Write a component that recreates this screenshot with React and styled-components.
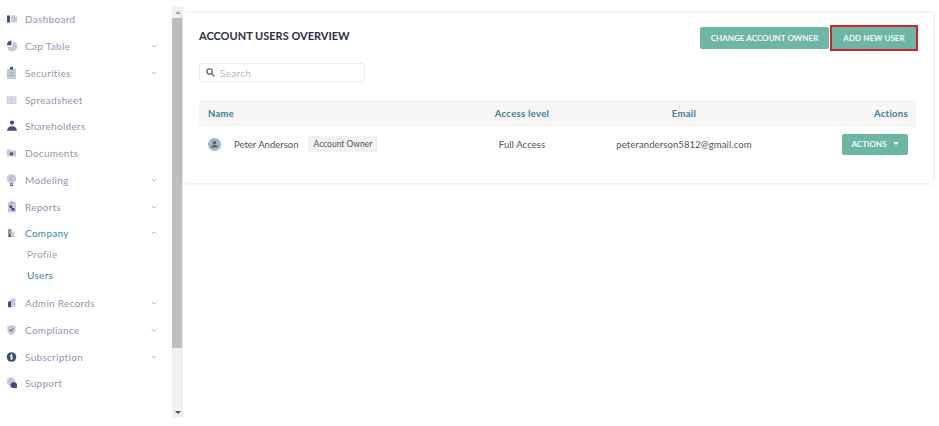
import React from 'react'
import styled, { createGlobalStyle } from 'styled-components'

const GlobalStyle = createGlobalStyle`
  html, body {
    margin: 0;
    padding: 0;
    background: #fff;
    font-family: 'Lato', 'Liberation Sans', sans-serif;
  }
`

const Page = styled.div`
  display: flex;
  width: 939px;
  height: 426px;
  overflow: hidden;
`

const Sidebar = styled.nav`
  width: 172px;
  flex: none;
  padding-top: 6px;
  box-sizing: border-box;
`

const NavRow = styled.div`
  display: flex;
  align-items: center;
  height: 26.75px;
  padding-left: 6px;
  font-size: 10px;
  letter-spacing: 0.3px;
  color: ${({ $active }) => ($active ? '#3a85ad' : '#8c97b3')};
`

const NavIcon = styled.svg`
  width: 12px;
  height: 12px;
  margin-right: 7px;
  flex: none;
`

const NavLabel = styled.span`
  flex: 1;
`

const Chevron = styled.svg`
  width: 6px;
  height: 4px;
  margin-right: 15px;
  fill: none;
  stroke: #a9b1c4;
  stroke-width: 1;
`

const SubList = styled.div`
  margin: -3px 0 4px;
`

const SubRow = styled.div`
  height: 21px;
  display: flex;
  align-items: center;
  padding-left: 27px;
  font-size: 10px;
  letter-spacing: 0.3px;
  color: ${({ $active }) => ($active ? '#3a85ad' : '#9aa0ad')};
`

const Scrollbar = styled.div`
  width: 11px;
  height: 412px;
  margin-top: 6px;
  flex: none;
  display: flex;
  flex-direction: column;
  background: #f0f0f0;
`

const ScrollArrow = styled.div`
  height: 12px;
  flex: none;
  display: flex;
  align-items: center;
  justify-content: center;
  &::before {
    content: '';
    border-left: 3px solid transparent;
    border-right: 3px solid transparent;
    ${({ $down }) => ($down ? 'border-top: 3px solid #505050;' : 'border-bottom: 3px solid #a3a3a3;')}
  }
`

const ScrollThumb = styled.div`
  height: 330px;
  flex: none;
  margin-right: 1px;
  background: #bebebe;
`

const ScrollTrack = styled.div`
  flex: 1;
`

const Main = styled.main`
  flex: 1;
  padding-top: 13px;
`

const Card = styled.section`
  width: 750px;
  height: 170px;
  box-sizing: border-box;
  padding: 14px 17px 0 16px;
  background: #fff;
  border-radius: 3px;
  box-shadow: 0 0 4px rgba(60, 70, 90, 0.16);
`

const CardHeader = styled.header`
  display: flex;
  align-items: center;
  justify-content: space-between;
  height: 22px;
`

const Title = styled.h1`
  margin: 0 0 6px;
  font-size: 11px;
  font-weight: 700;
  color: #2a3040;
`

const ButtonGroup = styled.div`
  display: flex;
  gap: 3px;
`

const Button = styled.button`
  height: ${({ $tall }) => ($tall ? 21 : 22)}px;
  width: ${({ $width }) => $width}px;
  padding: 0;
  border: 0;
  border-radius: 2px;
  background: #6db5a5;
  color: #f4faf8;
  font-family: inherit;
  font-size: 8px;
  font-weight: 700;
  letter-spacing: 0.05px;
  ${({ $marked }) => $marked && 'border-radius: 0; outline: 2px solid #d3202e;'}
`

const SearchBox = styled.div`
  display: flex;
  align-items: center;
  width: 166px;
  height: 19px;
  box-sizing: border-box;
  margin-top: 14px;
  padding-left: 6px;
  border: 1px solid #eceef1;
  border-radius: 2px;
  font-size: 10px;
  letter-spacing: 0.3px;
  color: #b3b9c6;
`

const SearchIcon = styled.svg`
  width: 9px;
  height: 9px;
  margin-right: 5px;
  fill: none;
  stroke: #66707f;
  stroke-width: 1.6;
`

const TableRow = styled.div`
  display: grid;
  grid-template-columns: 271px 104px 220px 122px;
  align-items: center;
  height: ${({ $head }) => ($head ? 27 : 34)}px;
  margin-top: ${({ $head }) => ($head ? 18 : 0)}px;
  background: ${({ $head }) => ($head ? '#f6f6f6' : 'transparent')};
`

const HeadCell = styled.div`
  font-size: 9.5px;
  font-weight: 700;
  letter-spacing: 0.3px;
  color: #44799a;
  text-align: ${({ $align }) => $align || 'center'};
  padding: ${({ $align }) => ($align === 'left' ? '0 0 0 9px' : $align === 'right' ? '0 8px 0 0' : '0')};
`

const Cell = styled.div`
  font-size: 9.5px;
  letter-spacing: 0.1px;
  color: #4d5260;
  text-align: ${({ $align }) => $align || 'center'};
  white-space: nowrap;
`

const UserCell = styled.div`
  display: flex;
  align-items: center;
  padding-left: 9px;
  font-size: 9.5px;
  color: #4d5260;
`

const Avatar = styled.svg`
  width: 13px;
  height: 13px;
  margin-right: 13px;
  flex: none;
`

const Badge = styled.span`
  display: flex;
  align-items: center;
  height: 16px;
  margin-left: 9px;
  padding: 0 6px;
  background: #f1f2f4;
  border-radius: 2px;
  font-size: 8.5px;
`

const ActionsCell = styled.div`
  display: flex;
  justify-content: flex-end;
  padding-right: 8px;
`

const Caret = styled.span`
  display: inline-block;
  margin-left: 6px;
  vertical-align: 2px;
  border-left: 3px solid transparent;
  border-right: 3px solid transparent;
  border-top: 3px solid #f4faf8;
`

const DARK = '#3f4f77'
const LIGHT = '#c3c9d8'

const icons = {
  dashboard: (
    <>
      <rect x="1" y="2.5" width="3" height="7" fill={DARK} />
      <rect x="5" y="2.5" width="6" height="7" fill={LIGHT} />
    </>
  ),
  cap: (
    <>
      <path d="M6.5 1.5a5 5 0 1 1-5.2 5.2h5.2z" fill={LIGHT} />
      <path d="M5.4 0.4a4.8 4.8 0 0 0-4.4 4.8h4.4z" fill={DARK} />
    </>
  ),
  securities: (
    <>
      <rect x="1" y="1.5" width="9" height="10.5" rx="1" fill={LIGHT} />
      <rect x="4" y="0" width="3" height="2.4" fill={DARK} />
      <path d="M3 6h5M3 8.5h5" stroke="#9aa3b8" strokeWidth="0.8" />
    </>
  ),
  sheet: (
    <path d="M1 2.8h9v6.6H1zM1 6h9M5.5 2.8v6.6" fill="#dde0e8" stroke="#c0c6d4" strokeWidth="0.8" />
  ),
  people: (
    <>
      <circle cx="6" cy="2.6" r="2.1" fill={DARK} />
      <path d="M1 10.8c.4-3.4 2.3-4.6 5-4.6s4.6 1.2 5 4.6z" fill={DARK} />
    </>
  ),
  docs: (
    <>
      <path d="M1 2.5h3.5l1 1H10v6H1z" fill={LIGHT} />
      <rect x="4" y="5.5" width="3" height="2.8" fill={DARK} />
    </>
  ),
  bulb: (
    <>
      <path d="M5.5 0a4.7 4.7 0 0 0-2.3 8.8h4.6A4.7 4.7 0 0 0 5.5 0z" fill={LIGHT} />
      <path d="M5.5 2v6" stroke="#9aa3b8" strokeWidth="0.8" />
      <rect x="3.5" y="9" width="4" height="1.2" fill="#8d97ad" />
      <rect x="4" y="10.6" width="3" height="1.4" fill={DARK} />
    </>
  ),
  reports: (
    <>
      <rect x="2" y="1.2" width="8" height="10" rx="0.8" fill={LIGHT} />
      <rect x="4" y="0.6" width="3.6" height="1.4" fill="#8d97ad" />
      <rect x="3.5" y="4.5" width="2.6" height="2.6" fill={DARK} />
      <rect x="5.5" y="7" width="3" height="2.6" fill={DARK} />
    </>
  ),
  company: (
    <>
      <rect x="2" y="2" width="3.5" height="8" fill="#8d97ad" />
      <rect x="6" y="4.5" width="2.4" height="5.5" fill={LIGHT} />
      <rect x="3" y="7.5" width="1.4" height="2.5" fill={DARK} />
    </>
  ),
  admin: (
    <>
      <path d="M5 1.5h4.5v8.5H5z" fill={LIGHT} />
      <path d="M2 5l3-1.5v6.8H2z" fill={DARK} />
    </>
  ),
  shield: (
    <>
      <path d="M5.5 1L9.5 2.3v4c0 2.4-1.8 3.8-4 4.7-2.2-.9-4-2.3-4-4.7v-4z" fill={LIGHT} />
      <path d="M3.8 5.8l1.3 1.3L7.4 4.6" fill="none" stroke={DARK} strokeWidth="1" />
    </>
  ),
  dollar: (
    <>
      <circle cx="5.5" cy="6" r="4.8" fill={DARK} />
      <path d="M7 4.3H4.6v1.7h1.8v1.7H4M5.5 3v6" fill="none" stroke="#fff" strokeWidth="0.8" />
    </>
  ),
  support: (
    <>
      <circle cx="5" cy="4.6" r="4" fill={LIGHT} />
      <path d="M7.2 5.2a3 3 0 0 1 3.8 3v2.8H6.3a3 3 0 0 1 .9-5.8z" fill={DARK} />
    </>
  ),
}

const NavItem = ({ icon, label, expandable, open, active }) => (
  <NavRow $active={active}>
    <NavIcon viewBox="0 0 12 12">{icons[icon]}</NavIcon>
    <NavLabel>{label}</NavLabel>
    {expandable && (
      <Chevron viewBox="0 0 6 4">
        <path d={open ? 'M0.5 3.3L3 0.8L5.5 3.3' : 'M0.5 0.7L3 3.2L5.5 0.7'} />
      </Chevron>
    )}
  </NavRow>
)

const App = () => {
  return (
    <Page>
      <GlobalStyle />
      <Sidebar>
        <NavItem icon="dashboard" label="Dashboard" />
        <NavItem icon="cap" label="Cap Table" expandable />
        <NavItem icon="securities" label="Securities" expandable />
        <NavItem icon="sheet" label="Spreadsheet" />
        <NavItem icon="people" label="Shareholders" />
        <NavItem icon="docs" label="Documents" />
        <NavItem icon="bulb" label="Modeling" expandable />
        <NavItem icon="reports" label="Reports" expandable />
        <NavItem icon="company" label="Company" expandable open active />
        <SubList>
          <SubRow>Profile</SubRow>
          <SubRow $active>Users</SubRow>
        </SubList>
        <NavItem icon="admin" label="Admin Records" expandable />
        <NavItem icon="shield" label="Compliance" expandable />
        <NavItem icon="dollar" label="Subscription" expandable />
        <NavItem icon="support" label="Support" />
      </Sidebar>
      <Scrollbar>
        <ScrollArrow />
        <ScrollThumb />
        <ScrollTrack />
        <ScrollArrow $down />
      </Scrollbar>
      <Main>
        <Card>
          <CardHeader>
            <Title>ACCOUNT USERS OVERVIEW</Title>
            <ButtonGroup>
              <Button $width={129}>CHANGE ACCOUNT OWNER</Button>
              <Button $width={84} $marked>ADD NEW USER</Button>
            </ButtonGroup>
          </CardHeader>
          <SearchBox>
            <SearchIcon viewBox="0 0 10 10">
              <circle cx="4" cy="4" r="3" />
              <path d="M6.3 6.3L9.5 9.5" />
            </SearchIcon>
            Search
          </SearchBox>
          <TableRow $head>
            <HeadCell $align="left">Name</HeadCell>
            <HeadCell>Access level</HeadCell>
            <HeadCell>Email</HeadCell>
            <HeadCell $align="right">Actions</HeadCell>
          </TableRow>
          <TableRow>
            <UserCell>
              <Avatar viewBox="0 0 13 13">
                <circle cx="6.5" cy="6.5" r="6.5" fill="#a9b2c7" />
                <circle cx="6.5" cy="4.8" r="1.8" fill="#55627f" />
                <path d="M3.2 9.6c.3-1.8 1.6-2.5 3.3-2.5s3 .7 3.3 2.5z" fill="#55627f" />
              </Avatar>
              Peter Anderson
              <Badge>Account Owner</Badge>
            </UserCell>
            <Cell>Full Access</Cell>
            <Cell>peteranderson5812@gmail.com</Cell>
            <ActionsCell>
              <Button $width={66} $tall>
                ACTIONS<Caret />
              </Button>
            </ActionsCell>
          </TableRow>
        </Card>
      </Main>
    </Page>
  )
}

export default App
